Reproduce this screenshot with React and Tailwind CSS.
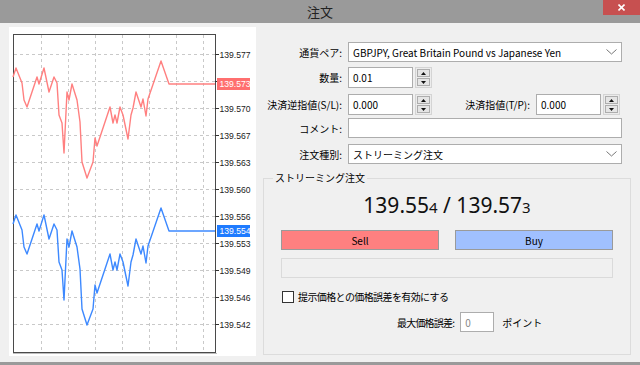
import React from "react";

const RED = [[13,77],[16,68],[22,83],[24,100],[27,107],[32,92],[37,77],[39,84],[44,68],[49,92],[54,77],[57,83],[59,115],[62,123],[64,153],[67,92],[69,100],[72,84],[77,100],[80,122],[82,162],[87,178],[93,162],[95,138],[97,146],[110,107],[113,123],[115,115],[117,123],[120,107],[123,115],[128,139],[131,115],[133,108],[136,92],[141,107],[143,99],[146,116],[148,99],[161,61],[169,84],[215,84]];

const toPts = (arr, dy) => arr.map(([x, y]) => `${x},${y + dy}`).join(" ");

const gridY = [54, 81, 108, 135, 162, 189, 216, 243, 270, 297, 324];
const gridX = [41, 68, 95, 122, 149, 176, 203];
const labels = {
  54: "139.577",
  108: "139.570",
  135: "139.567",
  162: "139.563",
  189: "139.560",
  216: "139.556",
  243: "139.553",
  270: "139.549",
  297: "139.546",
  324: "139.542",
};

const AX = "'Liberation Sans', Arial, sans-serif";

function Chart() {
  return (
    <svg width="247" height="329" viewBox="9 27 247 329" className="block">
      <rect x="9" y="27" width="247" height="329" fill="#ffffff" />
      {gridY.map((y) => (
        <line key={"h" + y} x1="14" x2="215" y1={y + 0.5} y2={y + 0.5} stroke="#c9c9c9" strokeDasharray="3 3" />
      ))}
      {gridX.map((x) => (
        <line key={"v" + x} x1={x + 0.5} x2={x + 0.5} y1="35" y2="352" stroke="#c9c9c9" strokeDasharray="3 3" />
      ))}
      <rect x="13.5" y="34.5" width="202" height="318" fill="none" stroke="#4a4a4a" />
      <line x1="13" x2="217" y1="353.5" y2="353.5" stroke="#bdbdbd" />
      {gridY.map((y) => (
        <line key={"t" + y} x1="215" x2="219" y1={y + 0.5} y2={y + 0.5} stroke="#333" />
      ))}
      {Object.entries(labels).map(([y, t]) => (
        <text key={"l" + y} x="219.5" y={Number(y) + 3.5} fontSize="8.6" fill="#222" fontFamily={AX}>
          {t}
        </text>
      ))}
      <polyline points={toPts(RED, 0)} fill="none" stroke="#ff8080" strokeWidth="1.4" strokeLinejoin="round" />
      <polyline points={toPts(RED, 147)} fill="none" stroke="#3d89ff" strokeWidth="1.4" strokeLinejoin="round" />
      <rect x="217" y="78" width="33" height="12" fill="#ff6f6f" />
      <text x="219.5" y="87.3" fontSize="8.6" fill="#ffffff" fontFamily={AX}>139.573</text>
      <rect x="217" y="225" width="33" height="12" fill="#1f7bff" />
      <text x="219.5" y="234.3" fontSize="8.6" fill="#ffffff" fontFamily={AX}>139.554</text>
    </svg>
  );
}

function Chevron() {
  return (
    <svg width="11" height="6" viewBox="0 0 11 6" className="block">
      <polyline points="0.5,0.5 5.5,5 10.5,0.5" fill="none" stroke="#777" strokeWidth="1" />
    </svg>
  );
}

function Spinner() {
  return (
    <div className="ml-[2px] w-[17px] h-[21px] flex flex-col gap-[1px] border border-[#d4d4d4] bg-[#ececec] p-[1px]">
      <div className="flex-1 flex items-center justify-center bg-[#e5e5e5] border border-[#adadad]">
        <svg width="5" height="3" viewBox="0 0 5 3" className="block"><polygon points="2.5,0 5,3 0,3" fill="#111" /></svg>
      </div>
      <div className="flex-1 flex items-center justify-center bg-[#e5e5e5] border border-[#adadad]">
        <svg width="5" height="3" viewBox="0 0 5 3" className="block"><polygon points="0,0 5,0 2.5,3" fill="#111" /></svg>
      </div>
    </div>
  );
}

function Label({ children, w = "w-[85px]" }) {
  return <div className={`${w} shrink-0 text-right pr-[6px] whitespace-nowrap`}>{children}</div>;
}

export default function App() {
  return (
    <div
      className="w-[640px] h-[365px] overflow-hidden bg-[#9a9a9a] text-[10px] text-black"
      style={{ fontFamily: "'Noto Sans CJK JP', 'Noto Sans', sans-serif" }}
    >
      <div className="relative h-[23px] flex items-center justify-center">
        <span className="text-[13px] text-[#222] leading-none">注文</span>
        <div className="absolute right-0 top-0 w-[37px] h-[15px] bg-[#c75050] flex items-center justify-center">
          <svg width="7" height="7" viewBox="0 0 7 7" className="block">
            <line x1="0.5" y1="0.5" x2="6.5" y2="6.5" stroke="#fff" strokeWidth="1.6" />
            <line x1="6.5" y1="0.5" x2="0.5" y2="6.5" stroke="#fff" strokeWidth="1.6" />
          </svg>
        </div>
      </div>
      <div className="h-[339px] bg-[#f0f0f0] flex items-start">
        <div className="ml-[9px] mt-[4px] w-[247px] h-[329px] bg-white">
          <Chart />
        </div>
        <div className="ml-[7px] w-[368px] pt-[19px] flex flex-col">
          <div className="h-[20px] flex items-center">
            <Label>通貨ペア:</Label>
            <div className="w-[274px] h-[20px] bg-white border border-[#adadad] flex items-center justify-between pl-[4px] pr-[4px]">
              <span>GBPJPY, Great Britain Pound vs Japanese Yen</span>
              <Chevron />
            </div>
          </div>
          <div className="mt-[5px] h-[21px] flex items-center">
            <Label>数量:</Label>
            <div className="w-[65px] h-[21px] bg-white border border-[#adadad] flex items-center pl-[4px]">0.01</div>
            <Spinner />
          </div>
          <div className="mt-[6px] h-[21px] flex items-center">
            <Label>決済逆指値(S/L):</Label>
            <div className="w-[65px] h-[21px] bg-white border border-[#adadad] flex items-center pl-[4px]">0.000</div>
            <Spinner />
            <Label w="w-[104px]">決済指値(T/P):</Label>
            <div className="w-[65px] h-[21px] bg-white border border-[#adadad] flex items-center pl-[4px]">0.000</div>
            <Spinner />
          </div>
          <div className="mt-[3px] h-[20px] flex items-center">
            <Label>コメント:</Label>
            <div className="w-[274px] h-[20px] bg-white border border-[#adadad]"></div>
          </div>
          <div className="mt-[6px] h-[20px] flex items-center">
            <Label>注文種別:</Label>
            <div className="w-[274px] h-[20px] bg-white border border-[#adadad] flex items-center justify-between pl-[4px] pr-[4px]">
              <span>ストリーミング注文</span>
              <Chevron />
            </div>
          </div>
          <div className="relative mt-[14px] h-[177px] border border-[#dcdcdc] flex flex-col">
            <div className="absolute -top-[8px] left-[9px] px-[2px] bg-[#f0f0f0] leading-[14px]">ストリーミング注文</div>
            <div
              className="mt-[14px] h-[24px] leading-[24px] text-center text-[21px] text-[#111]"
              style={{ fontFamily: "'Noto Sans', sans-serif" }}
            >
              139.55<span className="text-[15px]">4</span> / 139.57<span className="text-[15px]">3</span>
            </div>
            <div className="mt-[13px] px-[17px] flex justify-between">
              <div className="w-[158px] h-[20px] bg-[#ff8080] border border-[#9a9a9a] flex items-center justify-center">Sell</div>
              <div className="w-[158px] h-[20px] bg-[#a0c0ff] border border-[#9a9a9a] flex items-center justify-center">Buy</div>
            </div>
            <div className="mt-[8px] mx-[17px] h-[20px] border border-[#dadada] bg-[#f0f0f0]"></div>
            <div className="mt-[12px] pl-[18px] h-[13px] flex items-center">
              <div className="w-[12px] h-[12px] bg-white border border-[#333]"></div>
              <span className="ml-[4px] tracking-[-0.6px]">提示価格との価格誤差を有効にする</span>
            </div>
            <div className="mt-[9px] pl-[133px] h-[20px] flex items-center">
              <span className="tracking-[-0.8px]">最大価格誤差:</span>
              <div className="ml-[6px] w-[34px] h-[20px] bg-white border border-[#adadad] flex items-center pl-[4px] text-[#888]">0</div>
              <span className="ml-[8px]">ポイント</span>
            </div>
          </div>
        </div>
      </div>
    </div>
  );
}
